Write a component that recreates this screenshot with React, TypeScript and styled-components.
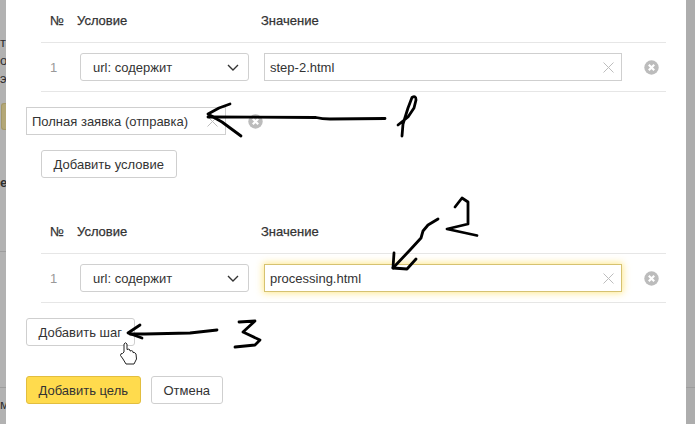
import React from "react";
import styled, { createGlobalStyle } from "styled-components";

const Global = createGlobalStyle`
  html, body { margin: 0; padding: 0; background: #b0b0b0; }
  * { box-sizing: border-box; }
  #root { font-family: "Liberation Sans", Arial, sans-serif; font-size: 13px; color: #333; }
`;

const Page = styled.div`
  position: relative;
  display: flex;
  width: 695px;
  height: 424px;
  overflow: hidden;
`;

const LeftStrip = styled.div`
  width: 6px;
  flex: none;
  display: flex;
  flex-direction: column;
  background: #b2b2b2;
  overflow: hidden;
`;

const RightStrip = styled.div`
  width: 9px;
  flex: none;
  display: flex;
  flex-direction: column;
  background: #adadad;
  padding-top: 387px;
`;

const Clip = styled.span<{ $top: number; $bold?: boolean }>`
  display: block;
  flex: none;
  height: 16px;
  line-height: 16px;
  margin-top: ${(p) => p.$top}px;
  font-size: 13px;
  font-weight: ${(p) => (p.$bold ? 700 : 400)};
  color: #2f2f2f;
  white-space: nowrap;
`;

const BackButton = styled.div`
  flex: none;
  width: 5px;
  height: 27px;
  margin-top: 16px;
  margin-left: 1px;
  background: #b3a777;
  border: 1px solid #a39868;
  border-right: 0;
  border-radius: 3px 0 0 3px;
`;

const StripLine = styled.div<{ $top: number }>`
  flex: none;
  height: 1px;
  margin-top: ${(p) => p.$top}px;
  background: #9d9d9d;
`;

const Panel = styled.div`
  width: 680px;
  flex: none;
  height: 424px;
  background: #fff;
`;

const Table = styled.div`
  margin-left: 35px;
  width: 625px;
`;

const HeadRow = styled.div<{ $top?: number }>`
  display: grid;
  grid-template-columns: 27px 184px 1fr;
  align-items: center;
  height: 43px;
  margin-top: ${(p) => p.$top ?? 0}px;
  padding-left: 9px;
  padding-bottom: 2px;
  border-bottom: 1px solid #e6e6e6;
`;

const HeadCell = styled.span`
  font-size: 13px;
  color: #333;
  -webkit-text-stroke: 0.25px #333;
`;

const Row = styled.div`
  display: flex;
  align-items: center;
  height: 49px;
  padding-left: 9px;
  border-bottom: 1px solid #e6e6e6;
`;

const Num = styled.span`
  width: 30px;
  flex: none;
  color: #999;
`;

const SelectBox = styled.button`
  flex: none;
  display: flex;
  align-items: center;
  justify-content: space-between;
  width: 169px;
  height: 28px;
  margin-right: 15px;
  padding: 0 9px 0 12px;
  background: #fff;
  border: 1px solid #d0d0d0;
  border-radius: 3px;
  font: inherit;
  color: #333;
`;

const Field = styled.label<{ $width: number; $focused?: boolean }>`
  flex: none;
  display: flex;
  align-items: center;
  width: ${(p) => p.$width}px;
  height: 28px;
  padding: 0 7px 0 5px;
  background: #fff;
  border: 1px solid ${(p) => (p.$focused ? "#d6c270" : "#cfcfcf")};
  box-shadow: ${(p) => (p.$focused ? "0 0 7px 1px rgba(255, 219, 77, 0.65)" : "none")};
`;

const FieldInput = styled.input`
  flex: 1;
  min-width: 0;
  border: 0;
  padding: 0;
  outline: none;
  background: transparent;
  font: inherit;
  color: #333;
`;

const GoalRow = styled.div`
  display: flex;
  align-items: center;
  margin: 15px 0 0 20px;
`;

const RemoveIcon = styled.svg<{ $left: number }>`
  flex: none;
  display: block;
  width: 15px;
  height: 15px;
  margin-left: ${(p) => p.$left}px;
`;

const Button = styled.button<{ $width: number; $primary?: boolean }>`
  display: block;
  flex: none;
  width: ${(p) => p.$width}px;
  height: 28px;
  padding: 0;
  font: inherit;
  color: #333;
  background: ${(p) => (p.$primary ? "#ffdb4d" : "#fff")};
  border: 1px solid ${(p) => (p.$primary ? "#e2be3f" : "#cfcfcf")};
  border-radius: 3px;
`;

const AddCondition = styled.div`
  margin: 15px 0 0 35px;
`;

const AddStep = styled.div`
  margin: 15px 0 0 20px;
`;

const Actions = styled.div`
  display: flex;
  gap: 10px;
  margin: 30px 0 0 20px;
`;

const Overlay = styled.svg`
  position: absolute;
  left: 0;
  top: 0;
  width: 695px;
  height: 424px;
  pointer-events: none;
`;

const Chevron = () => (
  <svg width="12" height="7" viewBox="0 0 12 7" aria-hidden="true">
    <path d="M1 1l5 5 5-5" fill="none" stroke="#333" strokeWidth="1.4" />
  </svg>
);

const Clear = () => (
  <svg width="11" height="11" viewBox="0 0 11 11" aria-hidden="true">
    <path d="M.5.5l10 10M10.5.5l-10 10" fill="none" stroke="#bdbdbd" strokeWidth="1" />
  </svg>
);

const Remove = ({ left }: { left: number }) => (
  <RemoveIcon $left={left} viewBox="0 0 15 15" aria-hidden="true">
    <circle cx="7.5" cy="7.5" r="7.2" fill="#bcbcbc" />
    <path d="M4.8 4.8l5.4 5.4M10.2 4.8l-5.4 5.4" stroke="#fff" strokeWidth="2.2" />
  </RemoveIcon>
);

const Head = ({ top }: { top?: number }) => (
  <HeadRow $top={top}>
    <HeadCell>№</HeadCell>
    <HeadCell>Условие</HeadCell>
    <HeadCell>Значение</HeadCell>
  </HeadRow>
);

const StepRow = ({ value, focused }: { value: string; focused?: boolean }) => (
  <Row>
    <Num>1</Num>
    <SelectBox type="button">
      url: содержит
      <Chevron />
    </SelectBox>
    <Field $width={357.5} $focused={focused}>
      <FieldInput readOnly value={value} />
      <Clear />
    </Field>
    <Remove left={22.5} />
  </Row>
);

export default function App() {
  return (
    <Page>
      <Global />
      <LeftStrip>
        <Clip $top={35}>т</Clip>
        <Clip $top={2}>о</Clip>
        <Clip $top={2}>э</Clip>
        <BackButton />
        <Clip $top={45} $bold>е</Clip>
        <StripLine $top={60} />
        <StripLine $top={135} />
        <Clip $top={9}>м</Clip>
      </LeftStrip>
      <Panel>
        <Table>
          <Head />
          <StepRow value="step-2.html" />
        </Table>
        <GoalRow>
          <Field $width={199.5}>
            <FieldInput readOnly value="Полная заявка (отправка)" />
            <Clear />
          </Field>
          <Remove left={22.5} />
        </GoalRow>
        <AddCondition>
          <Button type="button" $width={135.5}>Добавить условие</Button>
        </AddCondition>
        <Table>
          <Head top={33} />
          <StepRow value="processing.html" focused />
        </Table>
        <AddStep>
          <Button type="button" $width={108.5}>Добавить шаг</Button>
        </AddStep>
        <Actions>
          <Button type="button" $width={114.5} $primary>Добавить цель</Button>
          <Button type="button" $width={72.5}>Отмена</Button>
        </Actions>
      </Panel>
      <RightStrip>
        <StripLine $top={0} />
      </RightStrip>
      <Overlay viewBox="0 0 695 424" aria-hidden="true">
        <g fill="none" stroke="#000" strokeWidth="2.8" strokeLinecap="round" strokeLinejoin="round">
          <path d="M385 118.5L330 119Q322 119 316 117.5L208 117" />
          <path d="M230 104L219 108L208 114L222 122L241 136" />
          <path d="M402 136L403 124L408 108L412 97.5Q416 95 416 100L414 108L408 117L398 125" />
          <path d="M455 207L462 198L468 202V224L447 229L477 235.5" />
          <path d="M438 219L428 225L423 231L421 238L410 250L393 268" />
          <path d="M394 253L393 268L407 269L416 259" />
          <path d="M217 330L190 333L145 334L130 334" />
          <path d="M140 325L128 333L142 338" />
          <path d="M239 322L255 321L243 332L260 340L255 345L235 347" />
        </g>
        <path
          d="M124 352V344Q125.5 341.5 127 344V349.5Q129 348.5 130 350V351Q131.8 350 133 351.5V352.5Q135 352 136 354L136.5 359L134 364H126L123 359L120.5 355.5Q120.5 353 122.5 353.5Z"
          fill="#fff"
          stroke="#222"
          strokeWidth="1"
          strokeLinejoin="round"
        />
      </Overlay>
    </Page>
  );
}
